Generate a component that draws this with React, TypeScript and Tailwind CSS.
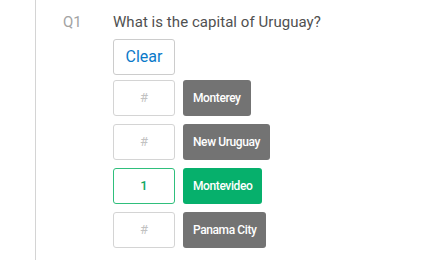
import React from "react";

const rows = [
  { label: "Monterey", value: "" },
  { label: "New Uruguay", value: "" },
  { label: "Montevideo", value: "1" },
  { label: "Panama City", value: "" },
];

export default function App() {
  return (
    <div className="w-[425px] h-[260px] bg-white flex overflow-hidden" style={{ fontFamily: "Roboto, 'Liberation Sans', sans-serif" }}>
      <div className="w-[35px] shrink-0" />
      <div className="flex-1 border-l border-[#d4d4d4] flex pl-[27px] pt-[12px]">
        <div className="w-[50px] shrink-0 text-[15px] leading-[20px] text-[#a3a3a3]">Q1</div>
        <div className="flex flex-col">
          <div className="text-[15px] leading-[20px] tracking-[0.05px] text-[#505050]">What is the capital of Uruguay?</div>
          <button className="mt-[7px] w-[62px] h-[36px] border border-[#cccccc] rounded-[3px] text-[#0b79c9] text-[16px] bg-white">
            Clear
          </button>
          <div className="mt-[5px] flex flex-col gap-[8px]">
            {rows.map((r) => {
              const active = r.value !== "";
              return (
                <div key={r.label} className="flex gap-[8px]">
                  <div
                    className={
                      active
                        ? "w-[62px] h-[36px] rounded-[3px] border border-[#2fbf7c] flex items-center justify-center text-[13px] font-medium text-[#12a862]"
                        : "w-[62px] h-[36px] rounded-[3px] border border-[#d4d4d4] flex items-center justify-center text-[13px] text-[#c2c2c2]"
                    }
                  >
                    {active ? r.value : "#"}
                  </div>
                  <div
                    className={
                      (active ? "bg-[#06b06c] " : "bg-[#737373] ") +
                      "h-[36px] rounded-[3px] px-[10px] flex items-center text-white text-[12px] font-medium tracking-[-0.4px]"
                    }
                  >
                    {r.label}
                  </div>
                </div>
              );
            })}
          </div>
        </div>
      </div>
    </div>
  );
}
